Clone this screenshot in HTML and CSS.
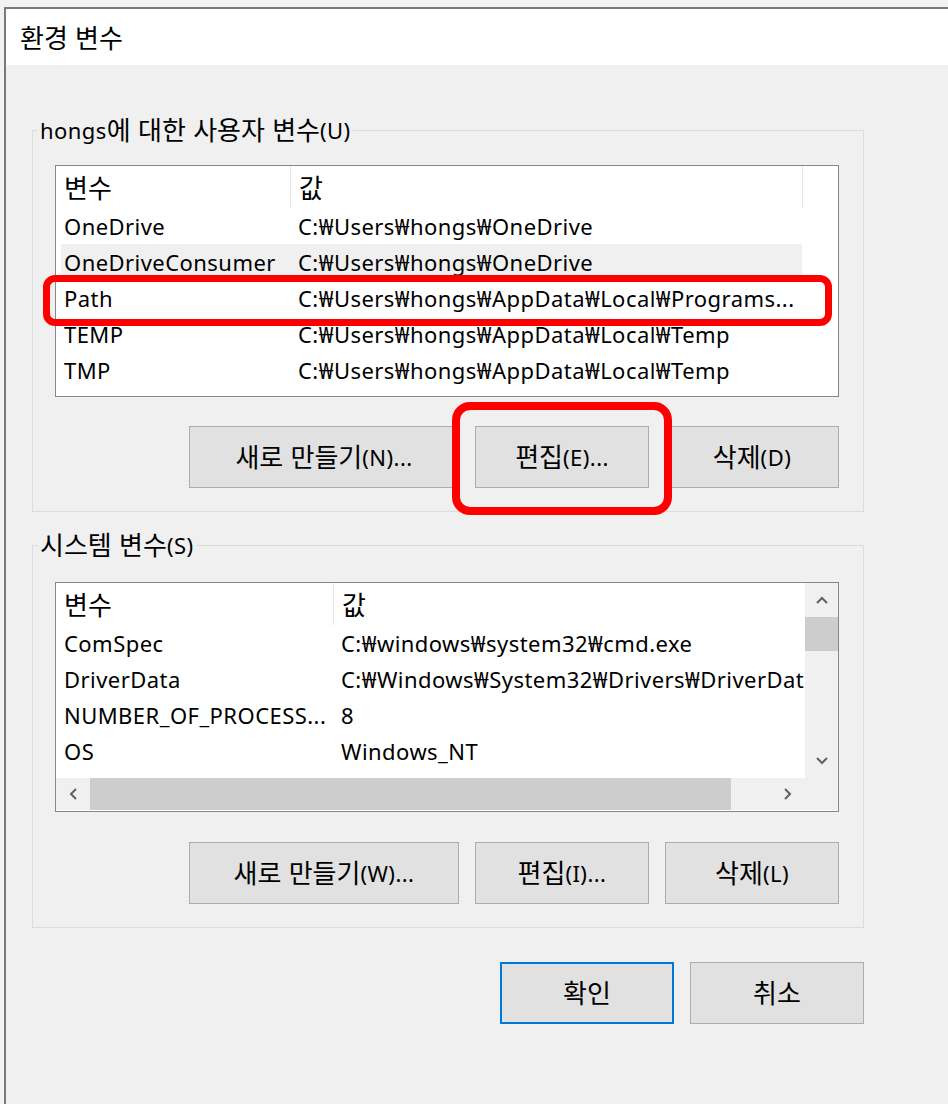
FILE: index.html
```html
<!DOCTYPE html>
<html lang="ko">
<head>
<meta charset="utf-8">
<title>환경 변수</title>
<link rel="stylesheet" href="styles.css">
</head>
<body>
<div class="window">
  <div class="titlebar"><span class="ko">환경 변수</span></div>
  <div class="content">
    <fieldset class="group group-user">
      <legend>hongs<span class="ko">에 대한 사용자 변수</span>(U)</legend>
      <div class="list list-user">
        <div class="lv-head">
          <div class="hc hc1"><span class="ko">변수</span></div>
          <div class="hc hc2"><span class="ko">값</span></div>
          <div class="hc hc3"></div>
        </div>
        <div class="lv-row">
          <span class="cell c1">OneDrive</span><span class="cell c2">C:₩Users₩hongs₩OneDrive</span>
        </div>
        <div class="lv-row hot">
          <span class="cell c1">OneDriveConsumer</span><span class="cell c2">C:₩Users₩hongs₩OneDrive</span>
        </div>
        <div class="lv-row marked">
          <span class="cell c1">Path</span><span class="cell c2">C:₩Users₩hongs₩AppData₩Local₩Programs...</span>
          <span class="mark mark-row"></span>
        </div>
        <div class="lv-row">
          <span class="cell c1">TEMP</span><span class="cell c2">C:₩Users₩hongs₩AppData₩Local₩Temp</span>
        </div>
        <div class="lv-row">
          <span class="cell c1">TMP</span><span class="cell c2">C:₩Users₩hongs₩AppData₩Local₩Temp</span>
        </div>
      </div>
      <div class="btn-row">
        <button class="btn btn-wide"><span class="ko">새로 만들기</span>(N)...</button>
        <button class="btn btn-marked"><span class="ko">편집</span>(E)...<span class="mark mark-btn"></span></button>
        <button class="btn"><span class="ko">삭제</span>(D)</button>
      </div>
    </fieldset>

    <fieldset class="group group-sys">
      <legend><span class="ko">시스템 변수</span>(S)</legend>
      <div class="list list-sys">
        <div class="lv-view">
          <div class="lv-head">
            <div class="hc hc1s"><span class="ko">변수</span></div>
            <div class="hc hc2s"><span class="ko">값</span></div>
          </div>
          <div class="lv-row">
            <span class="cell c1s">ComSpec</span><span class="cell c2s">C:₩windows₩system32₩cmd.exe</span>
          </div>
          <div class="lv-row">
            <span class="cell c1s">DriverData</span><span class="cell c2s">C:₩Windows₩System32₩Drivers₩DriverData</span>
          </div>
          <div class="lv-row">
            <span class="cell c1s">NUMBER_OF_PROCESS...</span><span class="cell c2s">8</span>
          </div>
          <div class="lv-row">
            <span class="cell c1s">OS</span><span class="cell c2s">Windows_NT</span>
          </div>
        </div>
        <div class="vscroll">
          <div class="sb-btn"><svg width="12" height="8" viewBox="0 0 12 8"><path d="M1 7 L6 2 L11 7" fill="none" stroke="#606060" stroke-width="2"/></svg></div>
          <div class="vthumb"></div>
          <div class="sb-fill"></div>
          <div class="sb-btn"><svg width="12" height="8" viewBox="0 0 12 8"><path d="M1 1 L6 6 L11 1" fill="none" stroke="#606060" stroke-width="2"/></svg></div>
        </div>
        <div class="hscroll">
          <div class="sb-btn sb-h"><svg width="8" height="12" viewBox="0 0 8 12"><path d="M7 1 L2 6 L7 11" fill="none" stroke="#606060" stroke-width="2"/></svg></div>
          <div class="hthumb"></div>
          <div class="sb-fill"></div>
          <div class="sb-btn sb-h"><svg width="8" height="12" viewBox="0 0 8 12"><path d="M1 1 L6 6 L1 11" fill="none" stroke="#606060" stroke-width="2"/></svg></div>
        </div>
        <div class="sb-corner"></div>
      </div>
      <div class="btn-row btn-row-sys">
        <button class="btn btn-wide"><span class="ko">새로 만들기</span>(W)...</button>
        <button class="btn"><span class="ko">편집</span>(I)...</button>
        <button class="btn"><span class="ko">삭제</span>(L)</button>
      </div>
    </fieldset>

    <div class="footer">
      <button class="btn btn-default"><span class="ko">확인</span></button>
      <button class="btn"><span class="ko">취소</span></button>
    </div>
  </div>
</div>
</body>
</html>
```

FILE: styles.css
```css
* { box-sizing: border-box; }

html, body {
  margin: 0;
  height: 100%;
  overflow: hidden;
}

body {
  background: #f2f2f2;
  font-family: "Noto Sans", "Noto Sans CJK KR", sans-serif;
  font-size: 22px;
  letter-spacing: 0.45px;
  color: #000;
}

.ko {
  font-family: "Noto Sans CJK KR", sans-serif;
  font-size: 26px;
  letter-spacing: 0;
  line-height: 1;
  vertical-align: -1px;
}

.window {
  margin: 7px 0 0 4px;
  height: calc(100vh - 7px);
  border-top: 2px solid #7a7a7a;
  border-left: 2px solid #7a7a7a;
  background: #f0f0f0;
}

.titlebar {
  height: 56px;
  background: #fff;
  display: flex;
  align-items: center;
  padding-left: 14px;
}

.content {
  padding-left: 26px;
}

.group {
  margin: 0;
  padding: 0 0 23px 0;
  width: 832px;
  min-width: 0;
  border: 1px solid #dcdcdc;
}

.group-user { margin-top: 50px; }
.group-sys { margin-top: 18px; }

.group legend {
  margin-left: 5px;
  padding: 0 2px;
  height: 30px;
  line-height: 30px;
}

.list {
  margin-left: 22px;
  width: 784px;
  background: #fff;
  border: 1px solid #828790;
}

.list-user {
  margin-top: 20px;
  height: 232px;
}

.list-sys {
  margin-top: 22px;
  height: 230px;
  display: grid;
  grid-template-columns: 1fr 33px;
  grid-template-rows: 1fr 33px;
}

.lv-view {
  overflow: hidden;
  min-width: 0;
}

.lv-head {
  display: flex;
  height: 42px;
}

.hc {
  display: flex;
  align-items: center;
  padding-left: 8px;
  border-right: 1px solid #e5e5e5;
  white-space: nowrap;
}

.hc1 { width: 235px; }
.hc2 { width: 512px; }
.hc3 { flex: 1; border-right: none; }
.hc1s { width: 278px; }
.hc2s { flex: 1; border-right: none; }

.lv-row {
  position: relative;
  display: flex;
  height: 36px;
  line-height: 36px;
  margin-left: 5px;
  width: 741px;
  white-space: nowrap;
}

.list-sys .lv-row { width: auto; }

.lv-row.hot { background: #f0f0f0; }

.cell {
  overflow: hidden;
  white-space: nowrap;
}

.c1 { width: 229px; padding-left: 3px; flex: none; }
.c2 { flex: 1; padding-left: 8px; }
.c1s { width: 272px; padding-left: 3px; flex: none; }
.c2s { flex: none; padding-left: 8px; }

.vscroll {
  background: #f0f0f0;
  display: flex;
  flex-direction: column;
}

.hscroll {
  background: #f0f0f0;
  display: flex;
  margin-bottom: 1px;
}

.sb-corner { background: #f0f0f0; margin-bottom: 1px; }

.sb-btn {
  height: 34px;
  display: flex;
  align-items: center;
  justify-content: center;
  flex: none;
}

.sb-btn.sb-h {
  height: auto;
  width: 34px;
}

.vthumb {
  height: 34px;
  background: #cdcdcd;
  flex: none;
}

.hthumb {
  width: 641px;
  background: #cdcdcd;
  flex: none;
}

.sb-fill { flex: 1; }

.btn-row {
  margin: 29px 0 0 22px;
  width: 784px;
  display: flex;
  justify-content: flex-end;
  gap: 16px;
}

.btn-row-sys { margin-top: 30px; }

.btn {
  width: 174px;
  height: 62px;
  padding: 0;
  background: #e1e1e1;
  border: 1px solid #adadad;
  font: inherit;
  letter-spacing: inherit;
  color: #000;
  flex: none;
}

.btn-wide { width: 270px; }

.btn-marked { position: relative; }

.footer {
  margin-top: 34px;
  width: 832px;
  display: flex;
  justify-content: flex-end;
  gap: 16px;
}

.btn-default {
  border: 2px solid #0078d7;
}

.mark {
  position: absolute;
  border-style: solid;
  border-color: #ff0000;
  z-index: 5;
  pointer-events: none;
}

.mark-row {
  left: -18px;
  top: -5px;
  width: 789px;
  height: 51px;
  border-width: 7px;
  border-radius: 12px;
}

.mark-btn {
  left: -24px;
  top: -25px;
  width: 220px;
  height: 113px;
  border-width: 8px;
  border-radius: 18px;
}
```
